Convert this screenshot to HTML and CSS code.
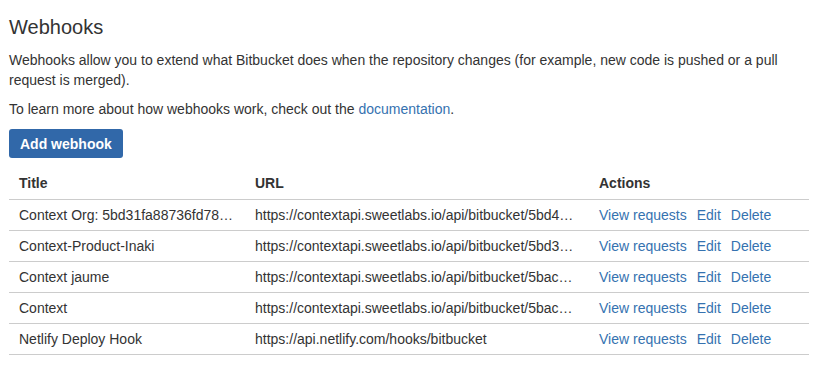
FILE: index.html
```html
<!DOCTYPE html>
<html lang="en">
<head>
    <meta charset="UTF-8">
    <meta name="viewport" content="width=device-width, initial-scale=1.0">
    <title>Webhooks</title>
    <link rel="stylesheet" href="styles.css">
</head>
<body>
    <div class="page">
        <h2>Webhooks</h2>
        <p class="intro">Webhooks allow you to extend what Bitbucket does when the repository changes (for example, new code is pushed or a pull request is merged).</p>
        <p class="more">To learn more about how webhooks work, check out the <a href="#">documentation</a>.</p>

        <button class="btn-primary">Add webhook</button>

        <table class="hooks">
            <colgroup>
                <col class="col-title">
                <col class="col-url">
                <col class="col-actions">
            </colgroup>
            <thead>
                <tr>
                    <th>Title</th>
                    <th>URL</th>
                    <th>Actions</th>
                </tr>
            </thead>
            <tbody>
                <tr>
                    <td><div class="clip">Context Org: 5bd31fa88736fd78…</div></td>
                    <td><div class="clip">https://contextapi.sweetlabs.io/api/bitbucket/5bd4…</div></td>
                    <td><div class="actions"><a href="#">View requests</a><a href="#">Edit</a><a href="#">Delete</a></div></td>
                </tr>
                <tr>
                    <td><div class="clip">Context-Product-Inaki</div></td>
                    <td><div class="clip">https://contextapi.sweetlabs.io/api/bitbucket/5bd3…</div></td>
                    <td><div class="actions"><a href="#">View requests</a><a href="#">Edit</a><a href="#">Delete</a></div></td>
                </tr>
                <tr>
                    <td><div class="clip">Context jaume</div></td>
                    <td><div class="clip">https://contextapi.sweetlabs.io/api/bitbucket/5bac…</div></td>
                    <td><div class="actions"><a href="#">View requests</a><a href="#">Edit</a><a href="#">Delete</a></div></td>
                </tr>
                <tr>
                    <td><div class="clip">Context</div></td>
                    <td><div class="clip">https://contextapi.sweetlabs.io/api/bitbucket/5bac…</div></td>
                    <td><div class="actions"><a href="#">View requests</a><a href="#">Edit</a><a href="#">Delete</a></div></td>
                </tr>
                <tr>
                    <td><div class="clip">Netlify Deploy Hook</div></td>
                    <td><div class="clip">https://api.netlify.com/hooks/bitbucket</div></td>
                    <td><div class="actions"><a href="#">View requests</a><a href="#">Edit</a><a href="#">Delete</a></div></td>
                </tr>
            </tbody>
        </table>
    </div>
</body>
</html>
```

FILE: styles.css
```css
body {
    margin: 0;
    background-color: #fff;
    color: #333;
    font-family: "Liberation Sans", Arial, sans-serif;
    font-size: 14px;
    line-height: 20px;
}
.page {
    padding: 12px 9px 20px;
}
h2 {
    margin: 0;
    font-size: 20px;
    line-height: 30px;
    font-weight: normal;
    color: #333;
}
p {
    margin: 0;
}
.intro {
    margin-top: 8px;
}
.more {
    margin-top: 9px;
}
a {
    color: #3572b0;
    text-decoration: none;
}
.btn-primary {
    display: block;
    margin-top: 10px;
    height: 29px;
    padding: 0 11px;
    border: none;
    border-radius: 3px;
    background-color: #3168a9;
    color: #fff;
    font-family: inherit;
    font-size: 14px;
    font-weight: bold;
    cursor: pointer;
}
.hooks {
    margin-top: 11px;
    width: 800px;
    border-collapse: collapse;
    table-layout: fixed;
}
.col-title {
    width: 236px;
}
.col-url {
    width: 344px;
}
.col-actions {
    width: 220px;
}
.hooks th,
.hooks td {
    padding: 5px 10px;
    text-align: left;
    border-bottom: 1px solid #ccc;
    vertical-align: top;
}
.hooks th {
    padding: 4px 10px 6px;
    font-weight: bold;
}
.clip {
    white-space: nowrap;
    overflow: hidden;
    text-overflow: ellipsis;
}
.actions {
    display: flex;
    gap: 10px;
    white-space: nowrap;
}
```
